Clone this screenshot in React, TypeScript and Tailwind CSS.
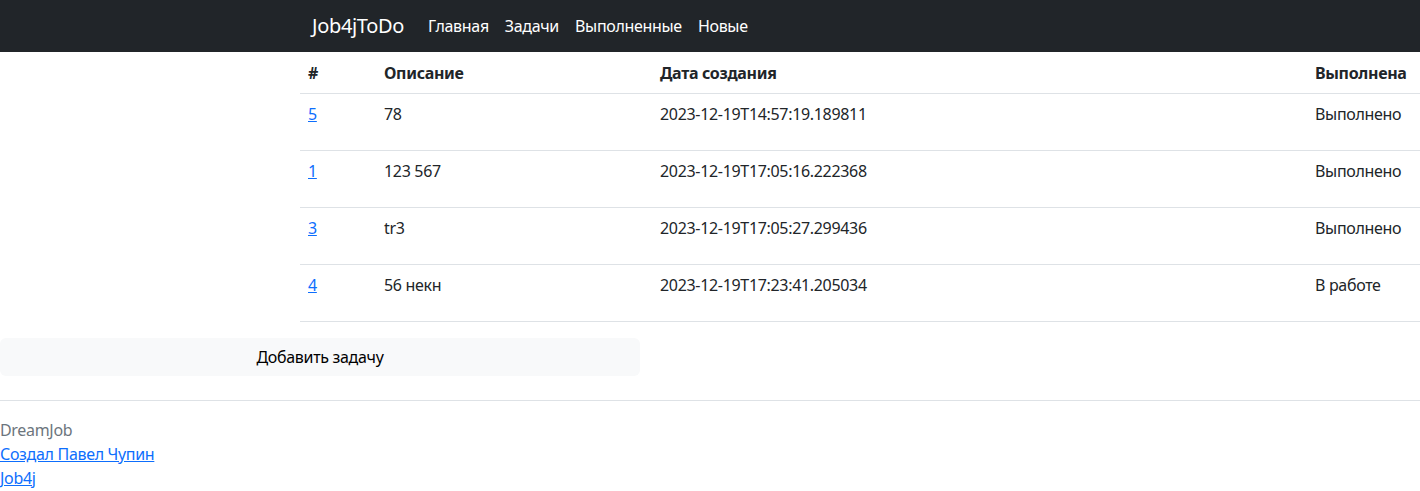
import React from 'react';

const tasks = [
  { id: 5, description: '78', created: '2023-12-19T14:57:19.189811', done: true },
  { id: 1, description: '123 567', created: '2023-12-19T17:05:16.222368', done: true },
  { id: 3, description: 'tr3', created: '2023-12-19T17:05:27.299436', done: true },
  { id: 4, description: '56 некн', created: '2023-12-19T17:23:41.205034', done: false },
];

const navLinks = ['Главная', 'Задачи', 'Выполненные', 'Новые'];

const App: React.FC = () => {
  return (
    <div
      className="min-h-screen bg-white text-[16px] tracking-[-0.02em] text-[#212529]"
      style={{ fontFamily: '"Noto Sans", "Open Sans", sans-serif' }}
    >
      <nav className="h-[52px] bg-[#212529]">
        <div className="flex h-full items-center pl-[312px]">
          <a className="mr-4 text-[20px] text-white" href="#">
            Job4jToDo
          </a>
          <div className="flex">
            {navLinks.map((link) => (
              <a key={link} href="#" className="px-2 text-white">
                {link}
              </a>
            ))}
          </div>
        </div>
      </nav>

      <div className="pl-[300px]">
        <table className="w-[1120px] table-fixed border-collapse text-left">
          <thead>
            <tr className="h-[41px] border-b border-[#dee2e6]">
              <th className="w-[76px] px-2 pt-0.5 font-bold">#</th>
              <th className="w-[276px] px-2 pt-0.5 font-bold">Описание</th>
              <th className="w-[655px] px-2 pt-0.5 font-bold">Дата создания</th>
              <th className="px-2 pt-0.5 font-bold">Выполнена</th>
            </tr>
          </thead>
          <tbody>
            {tasks.map((task) => (
              <tr key={task.id} className="h-[57px] border-b border-[#dee2e6] align-top">
                <td className="px-2 pt-2">
                  <a href="#" className="text-[#0d6efd] underline">
                    {task.id}
                  </a>
                </td>
                <td className="px-2 pt-2">{task.description}</td>
                <td className="px-2 pt-2">{task.created}</td>
                <td className="px-2 pt-2">{task.done ? 'Выполнено' : 'В работе'}</td>
              </tr>
            ))}
          </tbody>
        </table>
      </div>

      <div className="mt-4 w-[640px]">
        <button className="h-[38px] w-full rounded-md bg-[#f8f9fa] text-[#000]">
          Добавить задачу
        </button>
      </div>

      <hr className="mt-6 border-[#dee2e6]" />

      <footer className="flex flex-col pt-[17px] leading-6">
        <span className="text-[#6c757d]">DreamJob</span>
        <a href="#" className="text-[#0d6efd] underline">
          Создал Павел Чупин
        </a>
        <a href="#" className="text-[#0d6efd] underline">
          Job4j
        </a>
      </footer>
    </div>
  );
};

export default App;
